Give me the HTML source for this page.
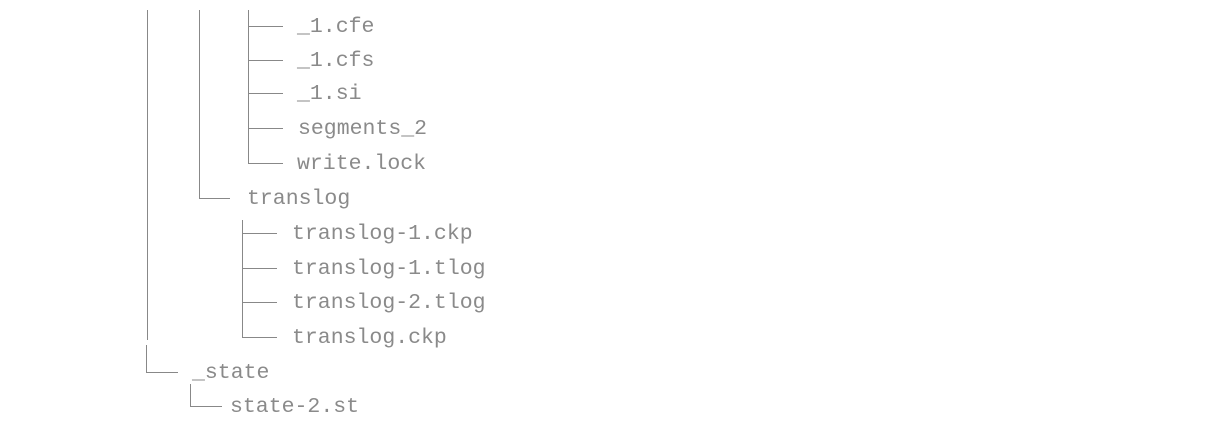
<!DOCTYPE html>
<html><head><style>
body{margin:0;width:1224px;height:428px;background:#fff;position:relative;overflow:hidden}
.t{position:absolute;font-family:"Liberation Mono",monospace;font-size:21.5px;color:#8a8a8a;line-height:22px;white-space:pre;transform:translateY(-10px)}
.v{position:absolute;width:1.2px;background:#888}
.h{position:absolute;height:1.2px;background:#888}
</style></head><body>
<div class="v" style="left:147px;top:10px;height:330px"></div>
<div class="v" style="left:146px;top:345px;height:27px"></div>
<div class="h" style="left:146px;top:372px;width:32px"></div>
<div class="t" style="left:192px;top:372px">_state</div>
<div class="v" style="left:190px;top:384px;height:22px"></div>
<div class="h" style="left:190px;top:406px;width:32px"></div>
<div class="t" style="left:230px;top:406px">state-2.st</div>
<div class="v" style="left:199px;top:10px;height:188px"></div>
<div class="h" style="left:199px;top:198px;width:31px"></div>
<div class="t" style="left:247px;top:198px">translog</div>
<div class="v" style="left:248px;top:10px;height:153px"></div>
<div class="h" style="left:248px;top:26px;width:35px"></div>
<div class="t" style="left:297px;top:26px">_1.cfe</div>
<div class="h" style="left:248px;top:60px;width:35px"></div>
<div class="t" style="left:297px;top:60px">_1.cfs</div>
<div class="h" style="left:248px;top:93px;width:35px"></div>
<div class="t" style="left:297px;top:93px">_1.si</div>
<div class="h" style="left:248px;top:128px;width:35px"></div>
<div class="t" style="left:298px;top:128px">segments_2</div>
<div class="h" style="left:248px;top:163px;width:35px"></div>
<div class="t" style="left:297px;top:163px">write.lock</div>
<div class="v" style="left:242px;top:220px;height:117px"></div>
<div class="h" style="left:242px;top:233px;width:35px"></div>
<div class="t" style="left:292px;top:233px">translog-1.ckp</div>
<div class="h" style="left:242px;top:268px;width:35px"></div>
<div class="t" style="left:292px;top:268px">translog-1.tlog</div>
<div class="h" style="left:242px;top:302px;width:35px"></div>
<div class="t" style="left:292px;top:302px">translog-2.tlog</div>
<div class="h" style="left:242px;top:337px;width:35px"></div>
<div class="t" style="left:292px;top:337px">translog.ckp</div>
</body></html>
